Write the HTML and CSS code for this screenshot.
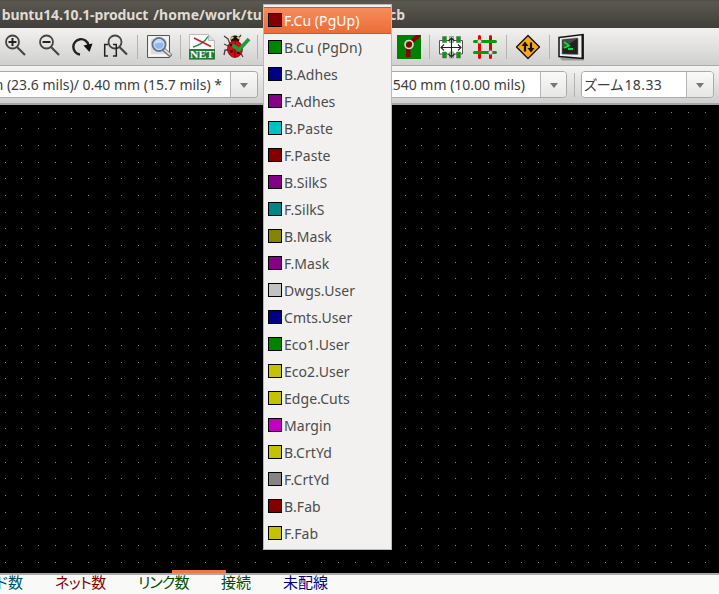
FILE: index.html
```html
<!DOCTYPE html>
<html lang="ja">
<head>
<meta charset="utf-8">
<title>Pcbnew</title>
<link rel="stylesheet" href="styles.css">
</head>
<body>
<div class="window">
  <header class="titlebar"><span class="title-start"><span>buntu14.10.1-product</span><span class="title-path">/home/work/tu</span></span><span class="title-end">cb</span></header>

  <div class="toolbar">
    <svg class="icon" width="34" height="30" viewBox="0 0 34 30"><g fill="none" stroke="#444"><path d="M17 17l8 8" stroke-width="2.200"/><circle cx="12.500" cy="12" r="6.500" stroke-width="1.800"/><path d="M8.500 12h8M12.500 8v8" stroke="#222" stroke-width="2"/></g></svg>
    <svg class="icon" width="34" height="30" viewBox="0 0 34 30"><g fill="none" stroke="#444"><path d="M17 17l8 8" stroke-width="2.200"/><circle cx="12.500" cy="12" r="6.500" stroke-width="1.800"/><path d="M8.500 12h8" stroke="#222" stroke-width="2"/></g></svg>
    <svg class="icon" width="34" height="30" viewBox="0 0 34 30"><path d="M12 24.500A7.700 7.700 0 1 1 20.500 15" fill="none" stroke="#222" stroke-width="2.400"/><path d="M15.500 15.500l9-2-3 8.500z" fill="#111"/></svg>
    <svg class="icon" width="35" height="30" viewBox="0 0 35 30"><path d="M17.500 17l7.500 7.500" stroke="#444" stroke-width="2.200"/><circle cx="13" cy="12" r="6.500" fill="none" stroke="#444" stroke-width="1.800"/><path d="M6 14.500H2.700V26H6M11 14.500h3.300V26H11" fill="none" stroke="#222" stroke-width="1.500"/></svg>
    <i class="sep"></i>
    <svg class="icon" width="42" height="30" viewBox="0 0 42 30"><path d="M9.500 5.500h22v22h-22z" fill="#eee" stroke="#555"/><path d="M12 8h17v17H12z" fill="#ddd" stroke="#fff"/><path d="M24 18l8 7" stroke="#777" stroke-width="4" stroke-linecap="round"/><path d="M25 18.500l7 6" stroke="#ddd" stroke-width="1.700" stroke-linecap="round"/><circle cx="21" cy="14.500" r="6.500" fill="#8fb9eb" stroke="#657584" stroke-width="2"/><circle cx="21" cy="14.500" r="5" fill="none" stroke="#d9e9fa" stroke-width="1"/><path d="M17 14q0-4 4-4 3 0 4 3-5-1-8 1" fill="#c8def8"/></svg>
    <i class="sep"></i>
    <svg class="icon" width="38" height="30" viewBox="0 0 38 30"><path d="M8.500 4.500h19l6 6v19h-25z" fill="#fafafa" stroke="#bbb"/><path d="M27.500 4.500v6h6" fill="#ddd" stroke="#bbb"/><path d="M8 19h26v10.500H8z" fill="#277a35"/><path d="M12 17c5-1 12-5 15-10.500" fill="none" stroke="#278b3d" stroke-width="1.500"/><path d="M13 8l17 8.500" stroke="#b92425" stroke-width="1.400"/><text x="21" y="28" class="net-label" textLength="24" lengthAdjust="spacingAndGlyphs">NET</text></svg>
    <svg class="icon" width="38" height="30" viewBox="0 0 38 30"><g fill="none" stroke="#444" stroke-width="1.300"><path d="M5 6l4 3 2 5M22 5l-3 4M10 16l-3-1-2-1M9 20H6l-1 5M21 22l3 5"/></g><ellipse cx="16" cy="9" rx="4.500" ry="3.500" fill="#111"/><path d="M11.500 9l3-2M18 7l3 2" stroke="#e5cf37" stroke-width="2"/><ellipse cx="16" cy="19" rx="7.500" ry="8.500" fill="#d80c10" stroke="#600" stroke-width=".7"/><path d="M16 11v16" stroke="#500" stroke-width=".7"/><g fill="#180000"><circle cx="12" cy="15" r="1.300"/><circle cx="19.500" cy="23" r="1.300"/><circle cx="12.500" cy="21.500" r="1.400"/></g><path d="M13.500 15l6.500 5L30 9" fill="none" stroke="#209b3a" stroke-width="3.600"/></svg>
    <i class="sep"></i>
    <div class="covered"></div>
    <svg class="icon" width="32" height="30" viewBox="0 0 32 30"><path d="M0 5h24v24H0z" fill="#008000"/><path d="M9 27V14h4.500v13zM10 13.500L19 5h4.500v1.500L13.500 16z" fill="#8b0000"/><circle cx="12" cy="14.500" r="4" fill="none" stroke="#ddd" stroke-width="1.600"/></svg>
    <i class="sep"></i>
    <svg class="icon" width="42" height="30" viewBox="0 0 42 30"><path d="M9.500 10.500h23v13.500h-23z" fill="#fff" stroke="#555"/><g fill="#00a000" stroke="#666" stroke-width=".5"><path d="M12.500 6.500h4v6h-4zM26.500 6.500h4v6h-4zM12.500 22h4v6h-4zM26.500 22h4v6h-4z"/><path d="M19.500 6.500h4v6h-4zM19.500 22h4v6h-4z" fill="#aed4ae"/></g><path d="M11 17.500h20M21.500 8v19M14 14.500l-3 3 3 3M28 14.500l3 3-3 3M18.500 11l3-3 3 3M18.500 24l3 3 3-3" fill="none" stroke="#222" stroke-width="1.100"/></svg>
    <svg class="icon" width="34" height="30" viewBox="0 0 34 30"><g stroke-width="3" stroke-linecap="round"><path d="M7.500 6.500v21M18.500 6.500v21" stroke="#e40000"/><path d="M2.500 11.500h21M2.500 22.500h21" stroke="#009e00"/></g><g fill="#ddd" stroke="#777"><circle cx="7.500" cy="11.500" r="2.200"/><circle cx="18.500" cy="22.500" r="2.200"/></g></svg>
    <i class="sep"></i>
    <svg class="icon" width="42" height="30" viewBox="0 0 42 30"><path d="M21 5.500L32.500 17 21 28.500 9.500 17z" fill="#f5a81c" stroke="#111" stroke-width="1.300" stroke-linejoin="round"/><path d="M18 21.500v-7M24 12.500v7" stroke="#111" stroke-width="2.200"/><path d="M14.500 16l3.500-4.500 3.500 4.500zM20.500 18l3.500 4.500 3.500-4.500z" fill="#111"/></svg>
    <i class="sep"></i>
    <svg class="icon" width="42" height="32" viewBox="0 0 42 32"><path d="M10 28h24v2.500H12z" fill="#999"/><path d="M9 7.500l24-3v24L9 26.500z" fill="#eee" stroke="#111" stroke-width="1.500"/><path d="M32.500 4.500v24" stroke="#111" stroke-width="2"/><path d="M12 9.500l16-1.500v16.500l-16-.5z" fill="#222" stroke="#777" stroke-width=".6"/><path d="M12.500 10l15-1.500-15 10z" fill="#4a4a4a"/><path d="M14 12l5 3.500-5 2.500M18 19h5" fill="none" stroke="#00e636" stroke-width="1.800"/></svg>
  </div>

  <div class="toolbar options">
    <div class="combo track"><div class="field"><span class="track-text">m (23.6 mils)/ 0.40 mm (15.7 mils) *</span></div><div class="drop"></div></div>
    <div class="combo grid"><div class="field"><span class="grid-text">0.2540 mm (10.00 mils)</span></div><div class="drop"></div></div>
    <i class="sep"></i>
    <div class="combo zoom"><div class="field"><span class="zoom-text">ズーム<b>18.33</b></span></div><div class="drop"></div></div>
  </div>

  <main class="canvas">
    <svg width="719" height="468" shape-rendering="crispEdges">
      <defs><pattern id="dots" width="50" height="50" patternUnits="userSpaceOnUse"><path fill="#858585" d="M5 7h1v1H5zM21 7h1v1h-1zM38 7h1v1h-1zM5 23h1v1H5zM21 23h1v1h-1zM38 23h1v1h-1zM5 40h1v1H5zM21 40h1v1h-1zM38 40h1v1h-1z"/></pattern></defs>
      <rect width="719" height="468" fill="url(#dots)"/>
    </svg>
    <div class="scroll-thumb"></div>
  </main>

  <footer class="status">
    <span class="pads">ド数</span><span class="nets">ネット数</span><span class="links">リンク数</span><span class="connected">接続</span><span class="unrouted">未配線</span>
  </footer>

  <ul class="layers">
    <li class="selected"><i class="maroon"></i><span>F.Cu (PgUp)</span></li>
    <li><i class="green"></i><span>B.Cu (PgDn)</span></li>
    <li><i class="navy"></i><span>B.Adhes</span></li>
    <li><i class="purple"></i><span>F.Adhes</span></li>
    <li><i class="cyan"></i><span>B.Paste</span></li>
    <li><i class="maroon"></i><span>F.Paste</span></li>
    <li><i class="purple"></i><span>B.SilkS</span></li>
    <li><i class="teal"></i><span>F.SilkS</span></li>
    <li><i class="olive"></i><span>B.Mask</span></li>
    <li><i class="purple"></i><span>F.Mask</span></li>
    <li><i class="silver"></i><span>Dwgs.User</span></li>
    <li><i class="navy"></i><span>Cmts.User</span></li>
    <li><i class="green"></i><span>Eco1.User</span></li>
    <li><i class="yellow"></i><span>Eco2.User</span></li>
    <li><i class="yellow"></i><span>Edge.Cuts</span></li>
    <li><i class="magenta"></i><span>Margin</span></li>
    <li><i class="yellow"></i><span>B.CrtYd</span></li>
    <li><i class="gray"></i><span>F.CrtYd</span></li>
    <li><i class="maroon"></i><span>B.Fab</span></li>
    <li><i class="yellow"></i><span>F.Fab</span></li>
  </ul>
</div>
</body>
</html>
```
FILE: styles.css
```css
* { box-sizing: border-box; }
body { margin: 0; overflow: hidden; font-family: "Noto Sans", "Noto Sans CJK JP", sans-serif; font-size: 14px; color: #3c3c3c; }
.window { position: relative; display: flex; flex-direction: column; width: 719px; height: 594px; overflow: hidden; background: #f9f9f7; }
.titlebar { display: flex; height: 28px; flex: none; line-height: 29px; background: linear-gradient(#504e47 0, #5b5850 2px, #403f3a 100%); color: #dfdbd2; font-weight: 700; white-space: nowrap; }
.title-start { display: flex; justify-content: flex-end; width: 262px; letter-spacing: -.15px; }
.title-path { margin-left: 5px; letter-spacing: .05px; }
.title-end { margin-left: 127px; }

.toolbar { display: flex; align-items: flex-start; height: 38px; flex: none; padding-top: 2px; background: linear-gradient(#f2f1f0, #d0d0ce); border-bottom: 1px solid #aaa; }
.icon { flex: none; display: block; }
.sep { width: 1px; height: 24px; margin-top: 5px; flex: none; background: #b3b3b0; }
.covered { width: 139px; flex: none; }
.net-label { font: 700 11px "Liberation Serif", serif; fill: #fff; text-anchor: middle; }

.options { height: 39px; padding-top: 5px; background: linear-gradient(#f4f4f3, #cfcfcd); border-bottom: 2px solid #a6a6a6; }
.options .sep { margin: 2px 6px 0 7px; }
.combo { display: flex; height: 27px; flex: none; border: 1px solid #aaa; border-radius: 4px; overflow: hidden; }
.field { display: flex; align-items: center; flex: 1; min-width: 0; background: #fff; white-space: nowrap; }
.drop { display: flex; align-items: center; justify-content: center; width: 26px; flex: none; border-left: 1px solid #b5b5b5; background: linear-gradient(#fafafa, #e6e6e5); }
.drop::before { content: ""; margin-top: 2px; border: 4px solid transparent; border-top: 5px solid #777; border-bottom: 0; }
.track { width: 258px; border-left: 0; border-radius: 0 4px 4px 0; }
.track .field, .grid .field { justify-content: flex-end; }
.track .field { padding-right: 8px; }
.grid { width: 290px; margin-left: 19px; }
.grid .field { padding-right: 15px; }
.zoom { width: 133px; }
.zoom .drop, .track .drop { width: 27px; }
.zoom .field { padding: 0 0 2px 2px; }
.zoom-text { font-feature-settings: "palt"; }
.zoom-text b { font-weight: 400; letter-spacing: .4px; margin-left: 1px; }

.canvas { position: relative; height: 468px; flex: none; background: #000; }
.canvas svg { display: block; }
.scroll-thumb { position: absolute; left: 172px; bottom: 0; width: 54px; height: 3px; background: #ef7542; }
.status { display: flex; height: 21px; flex: none; border-top: 2px solid #a9a9a9; font: 15px/14px "Noto Sans CJK JP", sans-serif; font-feature-settings: "palt"; white-space: nowrap; }
.pads { display: flex; justify-content: flex-end; width: 23px; margin-right: 32px; color: #004f63; }
.nets { width: 83px; color: #840000; letter-spacing: -.5px; }
.links { width: 83px; color: #004b00; letter-spacing: -.9px; }
.connected { width: 62px; color: #004b00; }
.unrouted { color: #000084; }

.layers { position: absolute; left: 263px; top: 4px; width: 129px; height: 546px; margin: 0; padding: 2px 0; list-style: none; background: #f2f1f0; border: 1px solid #b9b9b5; color: #4c4c4c; }
.layers li { display: flex; align-items: center; height: 27px; padding-left: 4px; white-space: nowrap; letter-spacing: .05px; }
.layers .selected { background: linear-gradient(#f98b5b, #e96d39); border: solid #c5592f; border-width: 1px 0; color: #fff; }
.layers i { width: 14px; height: 14px; margin: 0 2px 1px 0; flex: none; border: 1px solid #000; }
.maroon { background: #840000; }
.green { background: #008400; }
.navy { background: #000084; }
.purple { background: #840084; }
.cyan { background: #00c2c2; }
.teal { background: #008484; }
.olive { background: #848400; }
.silver { background: #c2c2c2; }
.yellow { background: #c2c200; }
.magenta { background: #c200c2; }
.gray { background: #848484; }
```
